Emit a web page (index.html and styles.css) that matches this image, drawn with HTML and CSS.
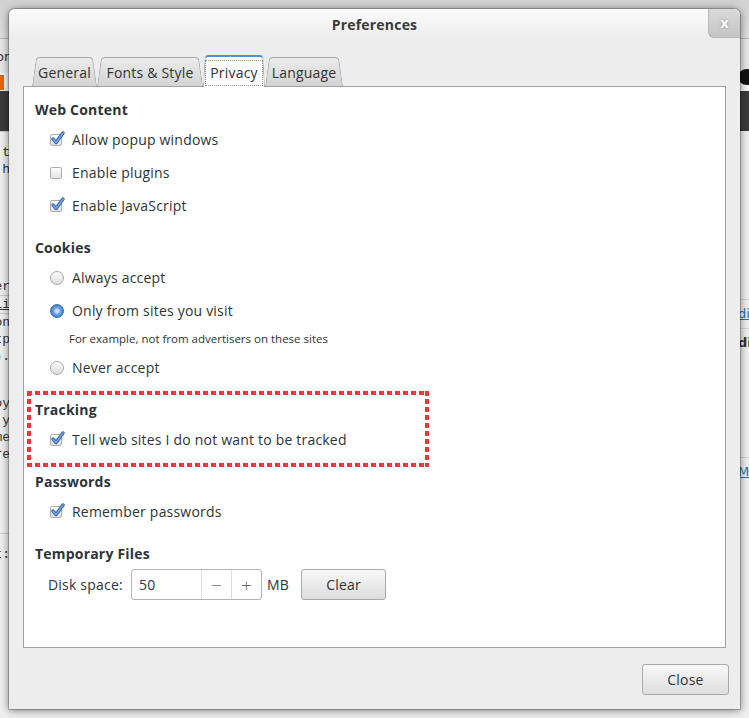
FILE: index.html
```html
<!DOCTYPE html>
<html lang="en">
<head>
    <meta charset="UTF-8">
    <meta name="viewport" content="width=device-width, initial-scale=1.0">
    <title>Preferences</title>
    <link rel="stylesheet" href="styles.css">
</head>
<body>
    <div class="backdrop">
        <div class="bd-top"></div>
        <div class="bd-tabs"><span class="bd-frag">or</span></div>
        <div class="bd-url"><span class="bd-icon"></span><span class="bd-dot"></span></div>
        <div class="bd-dark"></div>
        <div class="bd-page">
            <div class="bd-left">
                <div class="bd-line bd-sep">t</div>
                <div class="bd-line">h</div>
                <div class="bd-gap"></div>
                <div class="bd-line">er</div>
                <div class="bd-line bd-link">lii</div>
                <div class="bd-line">on</div>
                <div class="bd-line">tp</div>
                <div class="bd-line">).</div>
                <div class="bd-gap2"></div>
                <div class="bd-line">oy</div>
                <div class="bd-line">y</div>
                <div class="bd-line">me</div>
                <div class="bd-line">re</div>
                <div class="bd-gap3"></div>
                <div class="bd-line bd-sep">t:</div>
            </div>
            <div class="bd-right">
                <div class="bd-rgap"></div>
                <div class="bd-rline bd-blue">di</div>
                <div class="bd-rline bd-bold">di</div>
                <div class="bd-rgap2"></div>
                <div class="bd-rline bd-blue">M</div>
            </div>
        </div>
    </div>

    <div class="dialog">
        <div class="titlebar">
            <span class="title">Preferences</span>
            <span class="close-x">x</span>
        </div>
        <div class="dialog-body">
            <div class="tabs">
                <div class="tab tab-general">General</div>
                <div class="tab tab-fonts">Fonts &amp; Style</div>
                <div class="tab tab-privacy active"><span class="focus">Privacy</span></div>
                <div class="tab tab-language">Language</div>
            </div>
            <div class="page">
                <div class="section">
                    <div class="section-title">Web Content</div>
                    <div class="row"><span class="checkbox checked"><svg viewBox="0 0 16 16"><path class="ck-out" d="M3 8 L6 11.5 L13 2"/><path class="ck-in" d="M3 8 L6 11.5 L13 2"/></svg></span>Allow popup windows</div>
                    <div class="row"><span class="checkbox"></span>Enable plugins</div>
                    <div class="row"><span class="checkbox checked"><svg viewBox="0 0 16 16"><path class="ck-out" d="M3 8 L6 11.5 L13 2"/><path class="ck-in" d="M3 8 L6 11.5 L13 2"/></svg></span>Enable JavaScript</div>
                </div>
                <div class="section">
                    <div class="section-title">Cookies</div>
                    <div class="row"><span class="radio"></span>Always accept</div>
                    <div class="row"><span class="radio selected"></span>Only from sites you visit</div>
                    <div class="note">For example, not from advertisers on these sites</div>
                    <div class="row"><span class="radio"></span>Never accept</div>
                </div>
                <div class="section tracked">
                    <div class="section-title">Tracking</div>
                    <div class="row"><span class="checkbox checked"><svg viewBox="0 0 16 16"><path class="ck-out" d="M3 8 L6 11.5 L13 2"/><path class="ck-in" d="M3 8 L6 11.5 L13 2"/></svg></span>Tell web sites I do not want to be tracked</div>
                </div>
                <div class="section">
                    <div class="section-title">Passwords</div>
                    <div class="row"><span class="checkbox checked"><svg viewBox="0 0 16 16"><path class="ck-out" d="M3 8 L6 11.5 L13 2"/><path class="ck-in" d="M3 8 L6 11.5 L13 2"/></svg></span>Remember passwords</div>
                </div>
                <div class="section">
                    <div class="section-title">Temporary Files</div>
                    <div class="row disk">
                        <span class="disk-label">Disk space:</span>
                        <div class="spin">
                            <span class="spin-value">50</span>
                            <span class="spin-btn">&minus;</span>
                            <span class="spin-btn">+</span>
                        </div>
                        <span class="unit">MB</span>
                        <button class="btn clear">Clear</button>
                    </div>
                </div>
            </div>
            <div class="footer">
                <button class="btn close">Close</button>
            </div>
        </div>
    </div>
</body>
</html>
```

FILE: styles.css
```css
body {
    margin: 0;
    width: 749px;
    height: 718px;
    overflow: hidden;
    position: relative;
    font-family: "Open Sans", "DejaVu Sans", sans-serif;
    color: #2e3436;
    background: #ececec;
}

/* page behind the dialog */
.backdrop {
    display: flex;
    flex-direction: column;
    height: 718px;
    font-family: "Liberation Mono", monospace;
    font-size: 13px;
    color: #333;
}
.bd-top {
    height: 38px;
    background: linear-gradient(#d2d2d2, #dedede);
    border-bottom: 1px solid #b4b4b4;
}
.bd-tabs {
    height: 34px;
    background: #e6e6e6;
    display: flex;
    align-items: center;
}
.bd-frag {
    margin-left: -4px;
    font-family: "DejaVu Sans", sans-serif;
}
.bd-url {
    height: 18px;
    background: #f6f6f6;
    display: flex;
    justify-content: space-between;
    align-items: center;
}
.bd-icon {
    width: 4px;
    height: 15px;
    background: #e8640c;
}
.bd-dot {
    width: 18px;
    height: 16px;
    border-radius: 50%;
    background: #111;
    margin-right: -7px;
    margin-top: -10px;
}
.bd-dark {
    height: 40px;
    background: #3b3b3b;
}
.bd-page {
    flex: 1;
    display: flex;
    justify-content: space-between;
    background: #efefef;
}
.bd-left {
    width: 12px;
    display: flex;
    flex-direction: column;
    align-items: flex-end;
    overflow: hidden;
}
.bd-line {
    height: 17px;
    line-height: 17px;
    white-space: nowrap;
    margin-right: 2px;
}
.bd-sep {
    border-top: 1px solid #c9c9c9;
    padding-top: 12px;
    width: 30px;
    text-align: right;
}
.bd-gap {
    height: 100px;
}
.bd-link {
    text-decoration: underline;
    border-top: 1px solid #c8c8c8;
    border-bottom: 1px solid #c8c8c8;
    width: 30px;
    text-align: right;
}
.bd-gap2 {
    height: 30px;
}
.bd-gap3 {
    height: 70px;
}
.bd-right {
    width: 11px;
    display: flex;
    flex-direction: column;
    overflow: hidden;
    font-family: "DejaVu Sans", sans-serif;
}
.bd-rgap {
    height: 168px;
}
.bd-rgap2 {
    height: 100px;
}
.bd-rline {
    height: 28px;
    line-height: 28px;
    white-space: nowrap;
    border-top: 1px solid #d6d6d6;
}
.bd-blue {
    color: #2a6fb0;
    text-decoration: underline;
}
.bd-bold {
    font-weight: bold;
}

/* dialog */
.dialog {
    position: absolute;
    left: 9px;
    top: 9px;
    width: 731px;
    height: 700px;
    background: #ededed;
    border-radius: 6px 6px 0 0;
    box-shadow: 0 1px 9px rgba(0, 0, 0, 0.55), 0 0 0 1px rgba(0, 0, 0, 0.2);
    display: flex;
    flex-direction: column;
}
.titlebar {
    height: 31px;
    display: grid;
    grid-template-columns: 1fr auto 1fr;
    align-items: center;
    background: linear-gradient(#fcfcfc, #ececec);
    border-radius: 6px 6px 0 0;
}
.title {
    grid-column: 2;
    font-size: 14px;
    font-weight: 700;
    letter-spacing: 0.2px;
    color: #3b3b3b;
}
.close-x {
    grid-column: 3;
    justify-self: end;
    align-self: start;
    width: 31px;
    height: 28px;
    display: flex;
    align-items: center;
    justify-content: center;
    background: linear-gradient(#dadada, #c4c4c4);
    border-left: 1px solid #b9b9b9;
    border-bottom: 1px solid #b9b9b9;
    border-radius: 0 6px 0 6px;
    color: #fff;
    font-family: "DejaVu Sans", sans-serif;
    font-weight: bold;
    font-size: 14px;
    text-shadow: 0 0 2px #777;
}
.dialog-body {
    flex: 1;
    display: flex;
    flex-direction: column;
    padding: 15px 14px 0;
}

/* notebook tabs */
.tabs {
    display: flex;
    align-items: flex-end;
    height: 32px;
    margin-bottom: -1px;
    padding-left: 9px;
    position: relative;
    z-index: 1;
}
.tab {
    position: relative;
    z-index: 0;
    height: 29px;
    margin-bottom: 1px;
    padding-top: 2px;
    box-sizing: border-box;
    display: flex;
    align-items: center;
    justify-content: center;
    font-size: 14px;
    letter-spacing: 0.2px;
    --slant: 8deg;
}
.tab::before, .tab::after {
    content: "";
    position: absolute;
    top: 0;
    bottom: 0;
    width: 51%;
    z-index: -1;
    background: linear-gradient(#ececec, #d3d3d3);
    border: 1px solid #a9a9a9;
    border-bottom: none;
}
.tab::before {
    left: 0;
    border-right: none;
    border-radius: 4px 0 0 0;
    transform: skewX(calc(var(--slant) * -1));
    transform-origin: bottom left;
}
.tab::after {
    right: 0;
    border-left: none;
    border-radius: 0 4px 0 0;
    transform: skewX(var(--slant));
    transform-origin: bottom right;
}
.tab-general { width: 65px; }
.tab-fonts { width: 106px; }
.tab-privacy { width: 62px; }
.tab-language { width: 78px; }
.tab.active {
    height: 32px;
    margin-bottom: 0;
    padding-top: 3px;
    z-index: 2;
    --slant: 3deg;
}
.tab.active::before, .tab.active::after {
    background: #fff;
    border-top: 2px solid #4a90d9;
}
.focus {
    border: 1px dotted #8c8c8c;
    padding: 2px 4px 3px;
}

/* page */
.page {
    flex: 1;
    background: #fff;
    border: 1px solid #a1a1a1;
    padding: 13px 11px;
    font-size: 14px;
    letter-spacing: 0.2px;
}
.section {
    margin-bottom: 16px;
}
.section-title {
    height: 20px;
    line-height: 20px;
    font-weight: 700;
    margin-bottom: 3px;
}
.row {
    height: 33px;
    display: flex;
    align-items: center;
    gap: 8px;
    padding-left: 15px;
}
.note {
    height: 24px;
    line-height: 24px;
    font-size: 11.5px;
    letter-spacing: 0;
    padding-left: 34px;
}
.tracked {
    position: relative;
}
.tracked::before {
    content: "";
    position: absolute;
    left: -8px;
    top: -9px;
    width: 402px;
    height: 76px;
    background:
        repeating-linear-gradient(90deg, #e93a3a 0 5px, transparent 5px 8px) left top / 100% 4px no-repeat,
        repeating-linear-gradient(90deg, #e93a3a 0 5px, transparent 5px 8px) left bottom / 100% 4px no-repeat,
        repeating-linear-gradient(180deg, #e93a3a 0 5px, transparent 5px 8px) left top / 4px 100% no-repeat,
        repeating-linear-gradient(180deg, #e93a3a 0 5px, transparent 5px 8px) right top / 4px 100% no-repeat;
}

/* check & radio */
.checkbox {
    position: relative;
    width: 12px;
    height: 12px;
    margin-right: 2px;
    box-sizing: border-box;
    border: 1px solid #adadad;
    border-radius: 2px;
    background: linear-gradient(#fdfdfd, #e2e2e2);
}
.checkbox svg {
    position: absolute;
    left: -1px;
    top: -4px;
    width: 16px;
    height: 16px;
    overflow: visible;
}
.ck-out {
    fill: none;
    stroke: #2c5a97;
    stroke-width: 3.4;
    stroke-linecap: round;
    stroke-linejoin: round;
}
.ck-in {
    fill: none;
    stroke: #74a9ea;
    stroke-width: 1.6;
    stroke-linecap: round;
    stroke-linejoin: round;
}
.radio {
    width: 14px;
    height: 14px;
    box-sizing: border-box;
    border: 1px solid #ababab;
    border-radius: 50%;
    background: linear-gradient(#fdfdfd, #dcdcdc);
}
.radio.selected {
    border-color: #3f70b0;
    background: radial-gradient(circle at 50% 50%, #cfe2f9 0 1.5px, #77aef0 3px, #3f7fd2 6px);
}

/* disk space */
.disk {
    height: 35px;
    gap: 0;
    padding-left: 13px;
}
.disk-label {
    width: 83px;
}
.spin {
    width: 131px;
    height: 31px;
    box-sizing: border-box;
    display: flex;
    border: 1px solid #b3b3b3;
    border-radius: 3px;
    background: #fff;
}
.spin-value {
    flex: 1;
    padding-left: 7px;
    display: flex;
    align-items: center;
}
.spin-btn {
    width: 29px;
    display: flex;
    align-items: center;
    justify-content: center;
    border-left: 1px solid #dedede;
    color: #666;
    font-size: 19px;
    font-weight: 300;
}
.unit {
    width: 34px;
    margin-left: 5px;
}
.btn {
    height: 31px;
    border: 1px solid #a9a9a9;
    border-radius: 3px;
    background: linear-gradient(#f8f8f8, #dddddd);
    font-family: "Open Sans", "DejaVu Sans", sans-serif;
    font-size: 14px;
    letter-spacing: 0.2px;
    color: #2e3436;
    padding: 0;
}
.clear {
    width: 85px;
}
.footer {
    height: 61px;
    box-sizing: border-box;
    display: flex;
    justify-content: flex-end;
    padding: 16px 0 14px;
    margin-right: -3px;
}
.close {
    width: 87px;
}
```
